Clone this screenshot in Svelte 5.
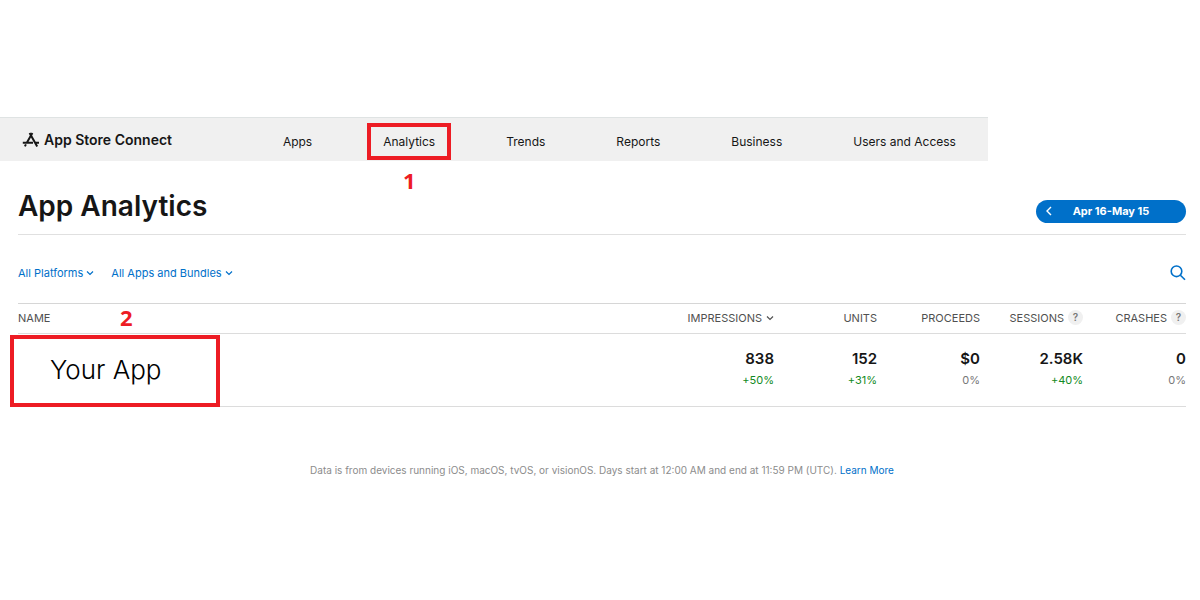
<script lang="ts">
  type Metric = { value: string; change: string }
  type Column = { label: string; sorted?: boolean; help?: boolean }

  const navItems = ['Apps', 'Analytics', 'Trends', 'Reports', 'Business', 'Users and Access']

  const filters = ['All Platforms', 'All Apps and Bundles']

  const columns: Column[] = [
    { label: 'Impressions', sorted: true },
    { label: 'Units' },
    { label: 'Proceeds' },
    { label: 'Sessions', help: true },
    { label: 'Crashes', help: true },
  ]

  const metrics: Metric[] = [
    { value: '838', change: '+50%' },
    { value: '152', change: '+31%' },
    { value: '$0', change: '0%' },
    { value: '2.58K', change: '+40%' },
    { value: '0', change: '0%' },
  ]
</script>

{#snippet chevron()}
  <svg class="chevron" viewBox="0 0 8 8" aria-hidden="true">
    <path d="M1 2.5 4 5.5 7 2.5" />
  </svg>
{/snippet}

<div class="page">
  <header class="top-bar">
    <a class="brand" href="#home">
      <svg class="brand__logo" viewBox="0 0 18 16" aria-hidden="true">
        <path d="M7.6 1 15.2 14.4M10.4 1 4.8 10.8M0.8 10.8H11M13.4 10.8H17M3.9 12.4 2.9 14.4" />
      </svg>
      App Store Connect
    </a>
    <nav class="nav" aria-label="Main">
      {#each navItems as item (item)}
        <a class="nav__link" href="#{item.toLowerCase().replaceAll(' ', '-')}">
          {item}
          {#if item === 'Analytics'}
            <span class="mark mark--nav"></span>
            <span class="step step--nav">1</span>
          {/if}
        </a>
      {/each}
    </nav>
  </header>

  <main class="content">
    <div class="heading">
      <h1>App Analytics</h1>
      <button type="button" class="date-range">
        <svg class="date-range__arrow" viewBox="0 0 6 10" aria-hidden="true">
          <path d="M5 1 1 5 5 9" />
        </svg>
        <span class="date-range__label">Apr 16-May 15</span>
      </button>
    </div>

    <div class="filters">
      {#each filters as filter (filter)}
        <button type="button" class="filters__item">{filter}{@render chevron()}</button>
      {/each}
      <button type="button" class="search" aria-label="Search">
        <svg viewBox="0 0 16 16" aria-hidden="true">
          <circle cx="6.5" cy="6.3" r="5.3" />
          <path d="M10.4 10.2 15 14.8" />
        </svg>
      </button>
    </div>

    <table class="apps">
      <thead>
        <tr>
          <th class="apps__name" scope="col">
            NAME
            <span class="step step--row">2</span>
          </th>
          {#each columns as col (col.label)}
            <th scope="col">
              <span class="apps__head">
                {col.label.toUpperCase()}
                {#if col.sorted}{@render chevron()}{/if}
                {#if col.help}<button type="button" class="help" aria-label="About {col.label}">?</button>{/if}
              </span>
            </th>
          {/each}
        </tr>
      </thead>
      <tbody>
        <tr>
          <td class="apps__name">
            <a class="apps__link" href="#app">Your App</a>
            <span class="mark mark--row"></span>
          </td>
          {#each metrics as metric, i (i)}
            <td>
              <div class="value">{metric.value}</div>
              <div class="change" class:change--up={metric.change.startsWith('+')}>{metric.change}</div>
            </td>
          {/each}
        </tr>
      </tbody>
    </table>

    <footer class="note">
      Data is from devices running iOS, macOS, tvOS, or visionOS. Days start at 12:00 AM and end at 11:59 PM (UTC).
      <a href="#learn-more">Learn More</a>
    </footer>
  </main>
</div>

<style>
  :global(body) {
    background: #fff;
  }
  .page {
    padding-top: 117px;
    font-family: Inter, 'Liberation Sans', sans-serif;
    color: #161616;
  }
  a {
    color: inherit;
    text-decoration: none;
  }
  button {
    padding: 0;
    border: 0;
    background: none;
    font: inherit;
    color: inherit;
    cursor: pointer;
  }
  svg {
    flex-shrink: 0;
    fill: none;
    stroke: currentColor;
  }
  .top-bar {
    display: flex;
    align-items: center;
    justify-content: space-between;
    box-sizing: border-box;
    width: 82.33%;
    height: 44px;
    padding: 0 32px 0 22px;
    border-top: 1px solid #dfe3e3;
    background: #f0f0f0;
  }
  .brand {
    display: flex;
    align-items: center;
    gap: 4px;
    font-size: 14px;
    font-weight: 600;
    line-height: 20px;
    white-space: nowrap;
  }
  .brand__logo {
    width: 18px;
    height: 16px;
    stroke-width: 2;
  }
  .nav {
    display: flex;
    gap: 71px;
    padding-top: 4px;
    font-size: 12px;
    line-height: 18px;
    white-space: nowrap;
  }
  .nav__link {
    position: relative;
  }
  .mark {
    position: absolute;
    box-sizing: border-box;
    border: 4px solid #ed1c24;
    pointer-events: none;
  }
  .mark--nav {
    inset: -10px -16px -9px;
  }
  .mark--row {
    top: 1px;
    left: -8px;
    width: 210px;
    height: 72px;
  }
  .step {
    position: absolute;
    font-family: 'Noto Sans', 'Open Sans', sans-serif;
    font-size: 22px;
    font-weight: 700;
    line-height: 24px;
    color: #ed1c24;
  }
  .step--nav {
    top: 35px;
    left: 0;
    right: 0;
    text-align: center;
  }
  .step--row {
    top: 1px;
    left: 102px;
  }
  .content {
    padding: 0 14px 0 18px;
  }
  .heading {
    display: flex;
    align-items: center;
    justify-content: space-between;
    height: 73px;
    border-bottom: 1px solid #e0e0e0;
  }
  h1 {
    margin: 0;
    padding: 26px 0 10px;
    font-size: 28px;
    font-weight: 600;
    line-height: 36px;
  }
  .date-range {
    display: flex;
    align-items: center;
    box-sizing: border-box;
    width: 150px;
    height: 23px;
    margin-top: 27px;
    padding: 0 16px 0 10px;
    border-radius: 12px;
    background: #0070c9;
    color: #fff;
    font-size: 11px;
    font-weight: 700;
  }
  .date-range__arrow {
    width: 6px;
    height: 10px;
    stroke-width: 1.4;
  }
  .date-range__label {
    flex: 1;
    text-align: center;
  }
  .filters {
    display: flex;
    align-items: center;
    gap: 17px;
    height: 68px;
    font-size: 11px;
    line-height: 16px;
    color: #0070c9;
  }
  .filters__item {
    display: flex;
    align-items: center;
    gap: 3px;
    padding-top: 8px;
  }
  .chevron {
    width: 8px;
    height: 8px;
    stroke-width: 1.2;
  }
  .search {
    width: 16px;
    height: 16px;
    margin-top: 8px;
    margin-left: auto;
  }
  .search svg {
    display: block;
    stroke-width: 1.6;
  }
  .apps {
    width: 100%;
    table-layout: fixed;
    border-collapse: separate;
    border-spacing: 0;
  }
  th,
  td {
    position: relative;
    width: 103px;
    padding: 0;
    border-bottom: 1px solid #dcdcdc;
    text-align: right;
  }
  th {
    height: 27px;
    padding-bottom: 2px;
    border-top: 1px solid #d6d6d6;
    font-size: 11px;
    font-weight: 400;
    line-height: 16px;
    color: #505050;
    white-space: nowrap;
  }
  td {
    height: 72px;
  }
  td:not(.apps__name) {
    height: 69px;
    padding-bottom: 3px;
  }
  .apps__name {
    width: auto;
    text-align: left;
  }
  .apps__head {
    display: flex;
    align-items: center;
    justify-content: flex-end;
    gap: 4px;
  }
  .help {
    width: 15px;
    height: 15px;
    border-radius: 50%;
    background: #f0f0f0;
    font-size: 10px;
    font-weight: 600;
    line-height: 15px;
    color: #777;
  }
  .apps__link {
    padding-left: 32px;
    font-size: 26px;
    font-weight: 300;
    line-height: 32px;
    color: #000;
  }
  .value {
    font-size: 15px;
    font-weight: 600;
    line-height: 22px;
  }
  .change {
    font-size: 11px;
    line-height: 20px;
    color: #777;
  }
  .change--up {
    color: #128a22;
  }
  .note {
    padding-top: 55px;
    font-size: 10px;
    line-height: 16px;
    text-align: center;
    color: #8c8c8c;
  }
  .note a {
    color: #0070c9;
  }
</style>
